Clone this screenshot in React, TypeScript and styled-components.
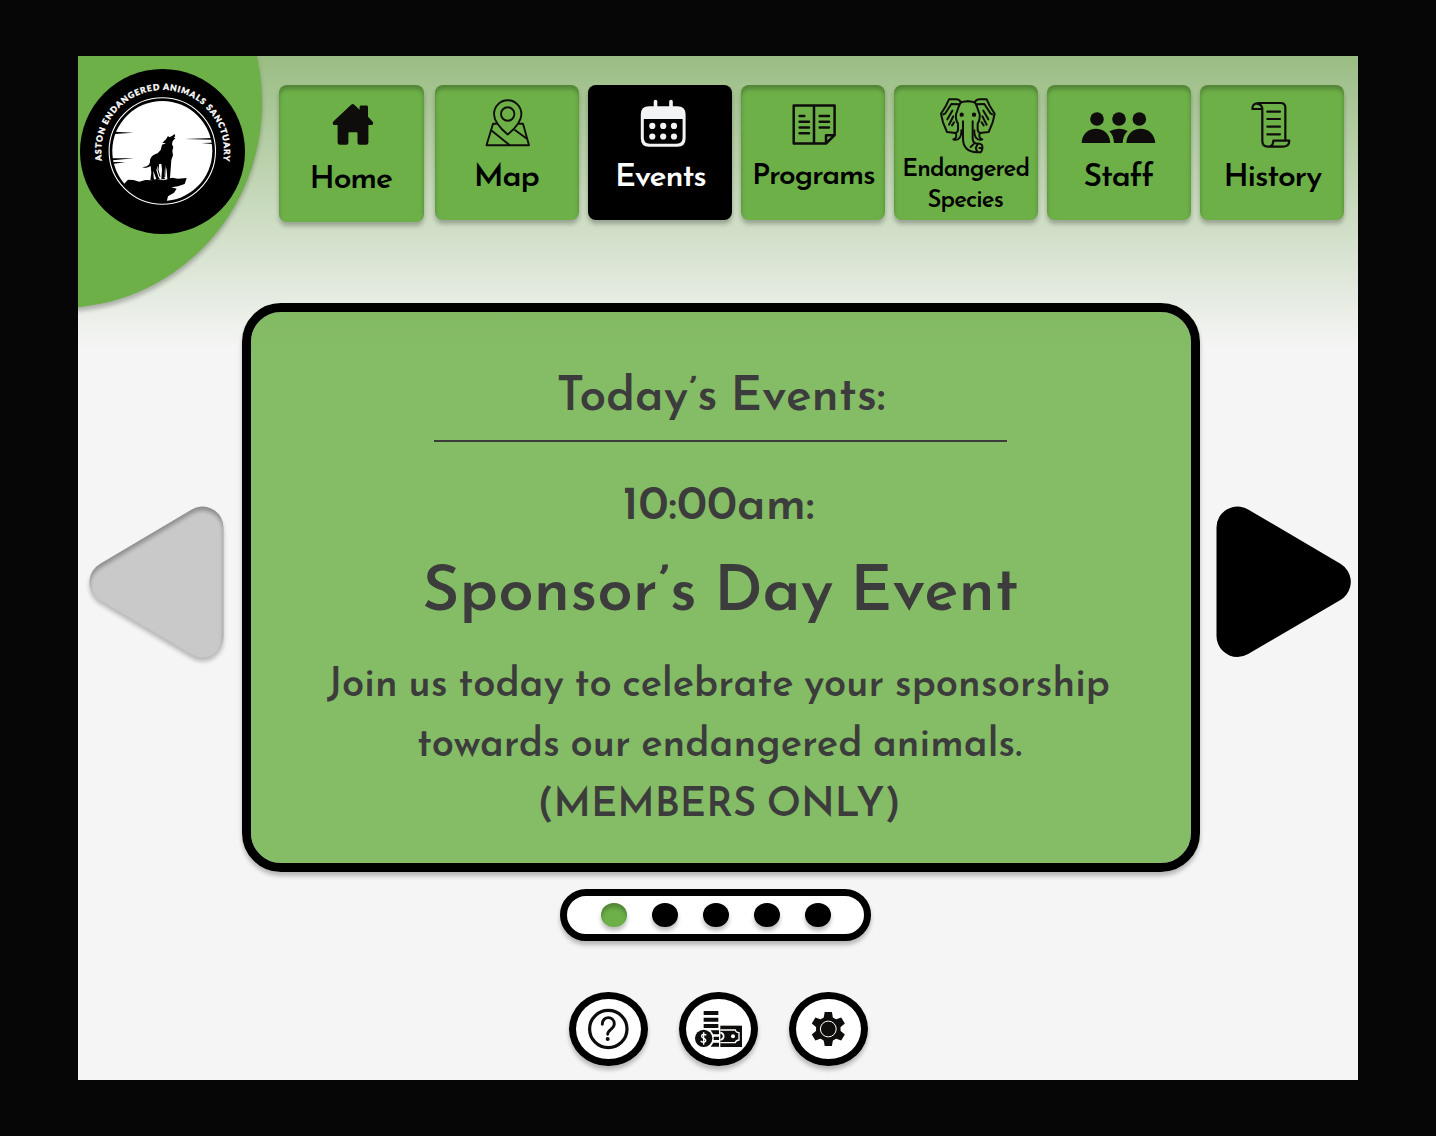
import React from 'react';
import styled, { createGlobalStyle, css } from 'styled-components';

const green = '#6db048';
const ink = '#0f0d0b';
const drop = '0 4px 4px rgba(0, 0, 0, 0.25)';
const inner = 'inset 0 4px 4px rgba(0, 0, 0, 0.25)';

const GlobalStyle = createGlobalStyle`
  *, *::before, *::after { box-sizing: border-box; }
  body { margin: 0; background: #060606; font-family: 'Josefin Sans', Lato, sans-serif; }
  button { font: inherit; color: inherit; border: 0; padding: 0; background: none; cursor: pointer; }
  svg { display: block; overflow: visible; }
`;

const Stage = styled.div`
  width: 1436px;
  height: 1136px;
  padding: 56px 78px;
  background: #060606;
`;

const Screen = styled.div`
  position: relative;
  width: 1280px;
  height: 1024px;
  overflow: hidden;
  display: flex;
  flex-direction: column;
  background: linear-gradient(#9abd83 0, #f5f5f5 292px);
`;

const CornerDisc = styled.div`
  position: absolute;
  left: -220px;
  top: -158px;
  width: 404px;
  height: 410px;
  border-radius: 50%;
  background: ${green};
  box-shadow: ${drop};
`;

const Header = styled.header`
  position: relative;
  display: flex;
  align-items: flex-start;
  height: 247px;
  padding: 13px 0 0 2px;
`;

const Nav = styled.nav`
  display: flex;
  align-items: flex-start;
  gap: 9.5px;
  margin: 16px 0 0 34px;
`;

const NavCard = styled.button<{ $active?: boolean; $large?: boolean }>`
  display: flex;
  flex-direction: column;
  align-items: center;
  flex: none;
  width: 143.5px;
  height: 134.5px;
  border-radius: 8px;
  color: #000;
  background: ${green};
  box-shadow: ${drop}, ${inner};
  ${p => p.$large && css`
    width: 144.5px;
    height: 136.5px;
    margin-right: 2px;
  `}
  ${p => p.$active && css`
    color: #fff;
    background: #000;
  `}
`;

const Labels = styled.span<{ $top: number }>`
  display: flex;
  flex-direction: column;
  align-items: center;
  margin-top: ${p => p.$top}px;
`;

const Line = styled.span<{ $size: number; $leading: number; $shift?: number }>`
  display: block;
  white-space: nowrap;
  font-size: ${p => p.$size}px;
  line-height: ${p => p.$leading}px;
  font-weight: 600;
  word-spacing: -0.055em;
  transform: translateX(${p => p.$shift ?? 0}px);
`;

const NavLine = styled(Line)`
  letter-spacing: -0.037em;
`;

const Carousel = styled.main`
  position: relative;
  display: flex;
  align-items: center;
  height: 569px;
  padding-left: 11px;
`;

const Arrow = styled.button`
  flex: none;
  width: 135px;
  height: 152px;
  margin-top: -11px;
`;

const EventCard = styled.section`
  display: flex;
  flex-direction: column;
  align-items: center;
  flex: none;
  width: 958px;
  height: 569px;
  margin: 0 16px 0 18px;
  padding-top: 58px;
  border: 9px solid #000;
  border-radius: 39px;
  background: rgba(109, 176, 72, 0.83);
  background-clip: padding-box;
  box-shadow: ${drop};
  color: #3c3c3c;
`;

const Rule = styled.hr`
  width: 573px;
  height: 2px;
  margin: 14px 2px 36.5px 0;
  border: 0;
  background: #3c3c3c;
`;

const Headline = styled(Line)`
  margin: 23.5px 0 25.5px;
`;

const Pager = styled.div`
  align-self: flex-start;
  display: flex;
  align-items: center;
  gap: 25.5px;
  width: 311px;
  height: 52px;
  margin: 17px 0 0 482px;
  padding-left: 34px;
  border: 7px solid #000;
  border-radius: 26px;
  background: #fff;
  box-shadow: ${drop};
`;

const Dot = styled.button<{ $on?: boolean }>`
  width: 25.5px;
  height: 24px;
  border-radius: 50%;
  background: ${p => (p.$on ? green : '#000')};
  box-shadow: ${p => (p.$on ? `${drop}, ${inner}` : drop)};
`;

const Tools = styled.footer`
  display: flex;
  gap: 31.5px;
  margin: 51px 0 0 491px;
`;

const Tool = styled.button`
  display: grid;
  place-items: center;
  width: 78.5px;
  height: 74px;
  border: 7px solid #000;
  border-radius: 50%;
  background: #fff;
  box-shadow: ${drop};
`;

const Logo = () => (
  <svg width="165" height="165" viewBox="80 69 165 165">
    <circle cx="162.5" cy="151.5" r="82.5" fill="#000" />
    <defs>
      <path id="rim" d="M101.9 160.6A61.4 61.4 0 1 1 223.3 160.6" />
    </defs>
    <text fontFamily="Lato, sans-serif" fontSize="8.4" fontWeight="900" fill="#fff" stroke="#fff" strokeWidth="0.35">
      <textPath href="#rim" textLength="211">ASTON ENDANGERED ANIMALS SANCTUARY</textPath>
    </text>
    <circle cx="162.3" cy="151" r="53.2" fill="none" stroke="#fff" strokeWidth="1.1" />
    <circle cx="162.3" cy="151" r="50" fill="#fff" />
    <g transform="translate(90 76) scale(.33333)">
      <path d="M72 167L130 170L72 174ZM66 247L132 247L68 253ZM70 258L106 259L72 263ZM284 189L366 186V191ZM334 201L366 200V204Z" fill="#000" />
      <path d="M100 326L114 311L130 312L148 317L166 312L186 313L200 309L222 313L246 305L264 308L290 306L284 324L264 331L244 334L260 338L252 350L234 361L230 377C180 382 130 360 100 326Z" fill="#000" />
      <path d="M254 174L256 181L251 184L256 187L248 195L246 205L250 214L247 224L249 238L244 252L242 280L240 306L247 310H232L230 282L226 266L222 304L226 310H214L216 280L214 264L206 264L199 282L205 302L210 310H199L190 284L191 306L194 313H181L184 290L182 270C174 275 165 277 156 274C168 272 178 270 180 258C179 244 190 236 203 232L212 222L216 206L228 202L217 200L228 190L234 180L238 184L246 180Z" fill="#000" />
      <path d="M206 264L204 282L210 302M226 266L224 304" stroke="#000" strokeWidth="3" fill="none" />
    </g>
  </svg>
);

const HomeIcon = () => (
  <svg width="144.5" height="60" viewBox="279 85 144.5 60" fill={ink}>
    <path d="M351.4 104.5q1.3-1 2.6 0l5.6 5.3v-2.9q0-1.3 1.3-1.3h5.7q1.4 0 1.4 1.4v9.8l4.7 5q1.2 1.6-.1 2.7-.6.6-1.5.6h-2.7v17.3q0 2.3-2.3 2.3h-6.6q-2 0-2-2v-9.6q0-.9-.9-.9h-7.3q-.9 0-.9.9v9.6q0 2-2 2h-6.5q-2.3 0-2.3-2.3v-17.3h-2.7q-1.4 0-2-1.2t.4-2.3Z" />
  </svg>
);

const MapIcon = () => (
  <svg width="143.5" height="60" viewBox="435 85 143.5 60" fill="none" stroke={ink} strokeWidth="1.9" strokeLinejoin="round">
    <path d="M507.7 134.5C501 129 494 121.5 494 114a13.7 13.7 0 0 1 27.4 0C521.4 121.5 514.5 129 507.7 134.5Z" />
    <circle cx="507.7" cy="114" r="6.7" />
    <path d="M496.7 123.8H493L486.5 145.2H529L523 123.8H518.9M491.5 130.5L509.5 145M514.5 129.7L527.3 139" />
  </svg>
);

const CalendarIcon = () => (
  <svg width="143.5" height="60" viewBox="588 85 143.5 60" fill="#f2f3f5">
    <path fillRule="evenodd" d="M649 106.2h28.4q8.2 0 8.2 8.2v24.1q0 8.2-8.2 8.2H649q-8.2 0-8.2-8.2v-24.1q0-8.2 8.2-8.2ZM643.8 119v18.8q0 5.9 5.9 5.9h27q5.9 0 5.9-5.9V119Z" />
    <path d="M655.5 101.5v7M671 101.5v7" stroke="#f2f3f5" strokeWidth="3.6" strokeLinecap="round" />
    {[652.3, 663.2, 674].map(x => [125.9, 136.5].map(y => <circle key={`${x}-${y}`} cx={x} cy={y} r="3.1" />))}
  </svg>
);

const ProgramIcon = () => (
  <svg width="143.5" height="60" viewBox="741 85 143.5 60" fill="none" stroke={ink} strokeWidth="2.5" strokeLinecap="round" strokeLinejoin="round">
    <path d="M793.7 105.5H834.6V135.2L826 143.5H793.7ZM814 105.5V143.5M826 143.5V135.2H834.6" />
    <path d="M799.6 116H804.3M799.6 121.8H809M799.6 127.4H809M799.6 133.3H809M819.7 116H829M819.7 121.8H829M819.7 127.4H829" />
  </svg>
);

const ElephantIcon = () => (
  <svg width="143.5" height="60" viewBox="894 85 143.5 60">
    <g transform="translate(890 75) scale(.33333)" fill="none" stroke={ink} strokeWidth="6" strokeLinejoin="round" strokeLinecap="round">
      {[false, true].map(flip => (
        <g key={String(flip)} transform={flip ? 'translate(467 0) scale(-1 1)' : undefined}>
          <path d="M234 79C224 79 214 80 210 86C204 97 203 108 198 117C197 130 198 138 204 146V163C204 169 201 173 197 174L171 171L159 142L153 116L168 92L177 73L200 73Q210 74 213 83" />
          <path d="M207 88L184 87L166 115L160 118M187 107L172 133M190 124L177 149M192 142L186 151" />
          <path d="M197 175C202 184 198 190 190 193C203 198 215 189 214 166" />
          <circle cx="215" cy="119" r="3.5" fill={ink} />
        </g>
      ))}
      <path d="M219 139V190C219 216 232 231 261 232H272Q280 222 276 210Q270 205 261 206C252 205 248 200 248 190V139M242 216L252 206M257 219L263 208M268 219H277M257 219L262 231" />
    </g>
  </svg>
);

const StaffIcon = () => (
  <svg width="143.5" height="60" viewBox="1047 85 143.5 60">
    <g transform="translate(1040 75) scale(.33333)" fill={ink}>
      <circle cx="171" cy="132" r="20.5" />
      <circle cx="237" cy="132" r="20.5" />
      <circle cx="298" cy="132" r="20.5" />
      <path d="M125 204C126 176 145 161 168 161S210 176 211 204ZM259 204C260 176 279 161 302 161S344 176 346 204ZM208 169Q236 154 263 168C252 178 249 190 248 204H222C221 190 218 178 208 169Z" />
    </g>
  </svg>
);

const ScrollIcon = () => (
  <svg width="143.5" height="60" viewBox="1200 85 143.5 60">
    <g transform="translate(1040 75) scale(.33333)" fill="none" stroke={ink} strokeWidth="6.5" strokeLinejoin="round" strokeLinecap="round">
      <path d="M667 102H637C637 90 645 84 656 84H722Q736 84 736 98V196M650 86C662 87 667 94 667 104V198Q667 215 684 215H730Q748 213 748 197H700C700 208 694 215 684 215" />
      <path d="M682 110H720M682 132H720M682 155H720M682 178H720" />
    </g>
  </svg>
);

const HelpIcon = () => (
  <svg width="64" height="60" viewBox="576 999 64 60" fill="none" stroke={ink}>
    <circle cx="608.3" cy="1029" r="18.7" strokeWidth="3.2" />
    <path d="M602.3 1024.3C602 1015.5 614.5 1015.5 614.3 1024C614.2 1029 607.7 1029.5 607.7 1034.2" strokeWidth="2.9" strokeLinecap="round" />
    <circle cx="607.7" cy="1038.9" r="2" fill={ink} stroke="none" />
  </svg>
);

const MoneyIcon = () => (
  <svg width="64" height="60" viewBox="686 999 64 60">
    <g transform="translate(550 880) scale(.33333)">
      <path fill={ink} d="M461 393H505V405H461ZM461 413H505V425H461ZM461 432H505V444H461ZM482 451H507V463H490ZM491 470H507V480H491ZM490 488H507V500H482Z" />
      <rect x="511" y="437" width="65" height="64" fill={ink} />
      <path d="M511 450H556Q557 457 567 458V480Q557 481 556 488H511" fill="none" stroke="#fff" strokeWidth="4" />
      <path d="M511 458Q521 460 521 469T511 480" fill="none" stroke="#fff" strokeWidth="5" />
      <circle cx="549" cy="469" r="6" fill="#fff" />
      <circle cx="461" cy="475" r="26" fill={ink} />
      <path d="M469 466Q461 460 456 465C449 474 471 474 467 483Q461 491 452 483M461 457V494" fill="none" stroke="#fff" strokeWidth="4" />
    </g>
  </svg>
);

const GearIcon = () => (
  <svg width="64" height="60" viewBox="796 999 64 60">
    <g transform="translate(828.3 1029)" fill={ink}>
      <circle r="12.3" />
      {[0, 60, 120, 180, 240, 300].map(a => (
        <path key={a} transform={`rotate(${a})`} d="M-5 -9L-3.6 -17H3.6L5 -9Z" />
      ))}
      <circle r="7.9" stroke="#fff" strokeWidth="1" />
    </g>
  </svg>
);

const PrevShape = () => (
  <svg width="135" height="152" viewBox="89 506.5 135 152">
    <defs>
      <filter id="pressed" x="-40%" y="-30%" width="180%" height="170%" colorInterpolationFilters="sRGB">
        <feOffset in="SourceAlpha" dy="4" result="moved" />
        <feGaussianBlur in="moved" stdDeviation="2" result="soft" />
        <feComposite in="SourceAlpha" in2="soft" operator="out" result="edge" />
        <feComponentTransfer in="edge" result="innerShade"><feFuncA type="linear" slope="0.3" /></feComponentTransfer>
        <feComponentTransfer in="soft" result="dropShade"><feFuncA type="linear" slope="0.25" /></feComponentTransfer>
        <feMerge>
          <feMergeNode in="dropShade" />
          <feMergeNode in="SourceGraphic" />
          <feMergeNode in="innerShade" />
        </feMerge>
      </filter>
    </defs>
    <path d="M202.5 528V637L110.5 582.5Z" fill="#c9c9c9" stroke="#c9c9c9" strokeWidth="42" strokeLinejoin="round" filter="url(#pressed)" />
  </svg>
);

const NextShape = () => (
  <svg width="135" height="152" viewBox="1216 506.5 135 152">
    <path d="M1237.5 528V636.5L1329.8 582.3Z" fill="#000" stroke="#000" strokeWidth="42" strokeLinejoin="round" />
  </svg>
);

type NavItem = {
  icon: () => React.JSX.Element;
  top: number;
  size: number;
  leading: number;
  active?: boolean;
  large?: boolean;
  lines: { text: string; shift?: number }[];
};

const navItems: NavItem[] = [
  { icon: HomeIcon, large: true, top: 16.7, size: 32, leading: 36, lines: [{ text: 'Home', shift: -0.5 }] },
  { icon: MapIcon, top: 15.2, size: 32, leading: 36, lines: [{ text: 'Map', shift: -0.5 }] },
  { icon: CalendarIcon, active: true, top: 15.2, size: 32, leading: 36, lines: [{ text: 'Events', shift: 0.5 }] },
  { icon: ProgramIcon, top: 14, size: 30, leading: 36, lines: [{ text: 'Programs', shift: 0.5 }] },
  { icon: ElephantIcon, top: 9.5, size: 24, leading: 31, lines: [{ text: 'Endangered' }, { text: 'Species', shift: -0.5 }] },
  { icon: StaffIcon, top: 15.2, size: 32, leading: 36, lines: [{ text: 'Staff', shift: -0.5 }] },
  { icon: ScrollIcon, top: 15, size: 32, leading: 36, lines: [{ text: 'History', shift: 0.5 }] },
];

export default function App() {
  return (
    <Stage>
      <GlobalStyle />
      <Screen>
        <CornerDisc />
        <Header>
          <Logo />
          <Nav>
            {navItems.map(({ icon: Icon, top, size, leading, active, large, lines }) => (
              <NavCard key={lines[0].text} $active={active} $large={large}>
                <Icon />
                <Labels $top={top}>
                  {lines.map(({ text, shift }) => (
                    <NavLine key={text} $size={size} $leading={leading} $shift={shift}>{text}</NavLine>
                  ))}
                </Labels>
              </NavCard>
            ))}
          </Nav>
        </Header>
        <Carousel>
          <Arrow aria-label="Previous"><PrevShape /></Arrow>
          <EventCard>
            <Line $size={48} $leading={56}>Today’s Events:</Line>
            <Rule />
            <Line $size={48} $leading={56} $shift={-2.5}>10:00am:</Line>
            <Headline $size={64} $leading={72} $shift={-0.5}>Sponsor’s Day Event</Headline>
            <Line $size={40} $leading={60} $shift={-2.5}>Join us today to celebrate your sponsorship</Line>
            <Line $size={40} $leading={60} $shift={-1.5}>towards our endangered animals.</Line>
            <Line $size={40} $leading={60} $shift={-2}>(MEMBERS ONLY)</Line>
          </EventCard>
          <Arrow aria-label="Next"><NextShape /></Arrow>
        </Carousel>
        <Pager>
          {[0, 1, 2, 3, 4].map(i => <Dot key={i} $on={i === 0} aria-label={`Event ${i + 1}`} />)}
        </Pager>
        <Tools>
          <Tool aria-label="Help"><HelpIcon /></Tool>
          <Tool aria-label="Donate"><MoneyIcon /></Tool>
          <Tool aria-label="Settings"><GearIcon /></Tool>
        </Tools>
      </Screen>
    </Stage>
  );
}
